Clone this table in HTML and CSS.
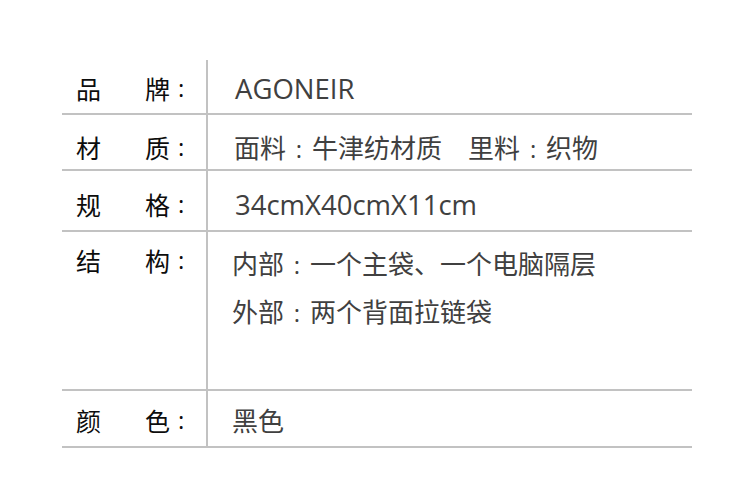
FILE: index.html
```html
<!DOCTYPE html>
<html lang="zh-CN">
<head>
<meta charset="utf-8">
<title>产品参数</title>
<link rel="stylesheet" href="styles.css">
</head>
<body>
<div class="spec">
  <div class="row r1">
    <div class="label"><span class="c1">品</span><span>牌</span><span class="colon">:</span></div>
    <div class="value"><span class="latin">AGONEIR</span></div>
  </div>
  <div class="row r2">
    <div class="label"><span class="c1">材</span><span>质</span><span class="colon">:</span></div>
    <div class="value">面料<span class="fc">:</span>牛津纺材质<span class="gap"></span>里料<span class="fc">:</span>织物</div>
  </div>
  <div class="row r3">
    <div class="label"><span class="c1">规</span><span>格</span><span class="colon">:</span></div>
    <div class="value"><span class="latin">34cmX40cmX11cm</span></div>
  </div>
  <div class="row r4">
    <div class="label"><span class="c1">结</span><span>构</span><span class="colon">:</span></div>
    <div class="value multi">
      <div class="line">内部<span class="fc">:</span>一个主袋、一个电脑隔层</div>
      <div class="line">外部<span class="fc">:</span>两个背面拉链袋</div>
    </div>
  </div>
  <div class="row r5">
    <div class="label"><span class="c1">颜</span><span>色</span><span class="colon">:</span></div>
    <div class="value">黑色</div>
  </div>
</div>
</body>
</html>
```
FILE: styles.css
```css
html, body {
  margin: 0;
  padding: 0;
  background: #fff;
}
body {
  font-family: "Noto Sans CJK SC", sans-serif;
  font-size: 26px;
  line-height: 30px;
  text-spacing-trim: space-all;
}
.spec {
  margin: 60px 0 0 62px;
  width: 630px;
}
.row {
  display: flex;
  border-bottom: 2px solid #c2c2c2;
}
.label {
  width: 144px;
  padding-left: 14px;
  display: flex;
  color: #0d0d0d;
  font-size: 25px;
}
.label .c1 {
  width: 69px;
}
.label .colon {
  margin-left: 8px;
  font-family: "Open Sans", sans-serif;
  font-size: 24px;
}
.value {
  flex: 1;
  border-left: 2px solid #c2c2c2;
  padding-left: 27px;
  color: #404040;
}
.latin {
  font-family: "Open Sans", sans-serif;
  font-size: 27.5px;
}
.fc {
  display: inline-block;
  width: 26px;
  text-align: center;
  font-family: "Open Sans", sans-serif;
  font-size: 24px;
}
.gap {
  display: inline-block;
  width: 26px;
}
.label, .value {
  box-sizing: border-box;
  height: 100%;
}
.r1 { height: 53px; }
.r2 { height: 54px; }
.r3 { height: 59px; }
.r4 { height: 157px; }
.r5 { height: 55px; }
.r1 .label, .r1 .value { padding-top: 13px; }
.r2 .label, .r2 .value { padding-top: 17px; }
.r3 .label, .r3 .value { padding-top: 18px; }
.r4 .label { padding-top: 13px; }
.r4 .value { padding-top: 16px; }
.r5 .label, .r5 .value { padding-top: 14px; }
.r2 .value { padding-left: 26px; }
.r4 .value, .r5 .value { padding-left: 24px; }
.multi .line + .line {
  margin-top: 16px;
}
```
